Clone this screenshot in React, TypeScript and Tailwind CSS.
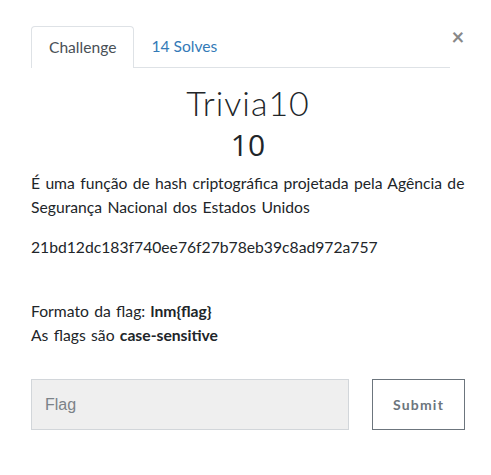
import React from "react";

// Challenge modal: tabs, title/value, description, flag form
export default function App() {
  return (
    <div
      className="w-[491px] h-[475px] bg-white text-[#212529]"
      style={{ fontFamily: "Lato, 'Open Sans', sans-serif" }}
    >
      <div className="pl-[31px] pr-[26px] pt-[26px]">
        {/* Tabs */}
        <div className="flex items-start">
          <ul className="flex flex-1 border-b border-[#dee2e6] h-[42px]">
            <li className="h-[42px] px-[17px] flex items-center border border-b-0 border-[#dee2e6] rounded-t-[4px] bg-white text-[15.6px] text-[#495057] mb-[-1px]">
              Challenge
            </li>
            <li className="h-[41px] px-[17px] flex items-center text-[15.6px] text-[#337ab7]">
              14 Solves
            </li>
          </ul>
          <button className="w-[14px] mt-[1px] ml-[1px] text-[#888] text-[22px] font-bold leading-[20px] flex justify-center">
            ×
          </button>
        </div>

        {/* Title */}
        <div className="text-center mt-[15px]">
          <h2 className="text-[34px] font-light leading-[40px] tracking-[1px]">Trivia10</h2>
          <h3 className="text-[30px] font-normal leading-[36px] mt-[4px] font-['Open_Sans',sans-serif]">10</h3>
        </div>

        {/* Description */}
        <div className="text-[15.7px] leading-[24px] mt-[8px] [word-spacing:1.3px]">
          <p>É uma função de hash criptográfica projetada pela Agência de Segurança Nacional dos Estados Unidos</p>
          <p className="mt-[16px]">21bd12dc183f740ee76f27b78eb39c8ad972a757</p>
          <p className="mt-[40px]">
            Formato da flag: <strong className="font-bold">lnm{"{flag}"}</strong>
          </p>
          <p>
            As flags são <strong className="font-bold">case-sensitive</strong>
          </p>
        </div>

        {/* Flag form */}
        <div className="flex mt-[32px] gap-[23px]">
          <input
            placeholder="Flag"
            className="w-[318px] h-[51px] bg-[#efefef] border border-[#d2d6da] px-[13px] text-[16px] text-[#495057] placeholder:text-[#7b8288] outline-none"
            style={{ fontFamily: "'Liberation Sans', Arial, sans-serif" }}
          />
          <button className="w-[93px] h-[51px] border border-[#6c757d] bg-white text-[14px] font-bold tracking-[1.2px] text-[#6c757d]">
            Submit
          </button>
        </div>
      </div>
    </div>
  );
}
